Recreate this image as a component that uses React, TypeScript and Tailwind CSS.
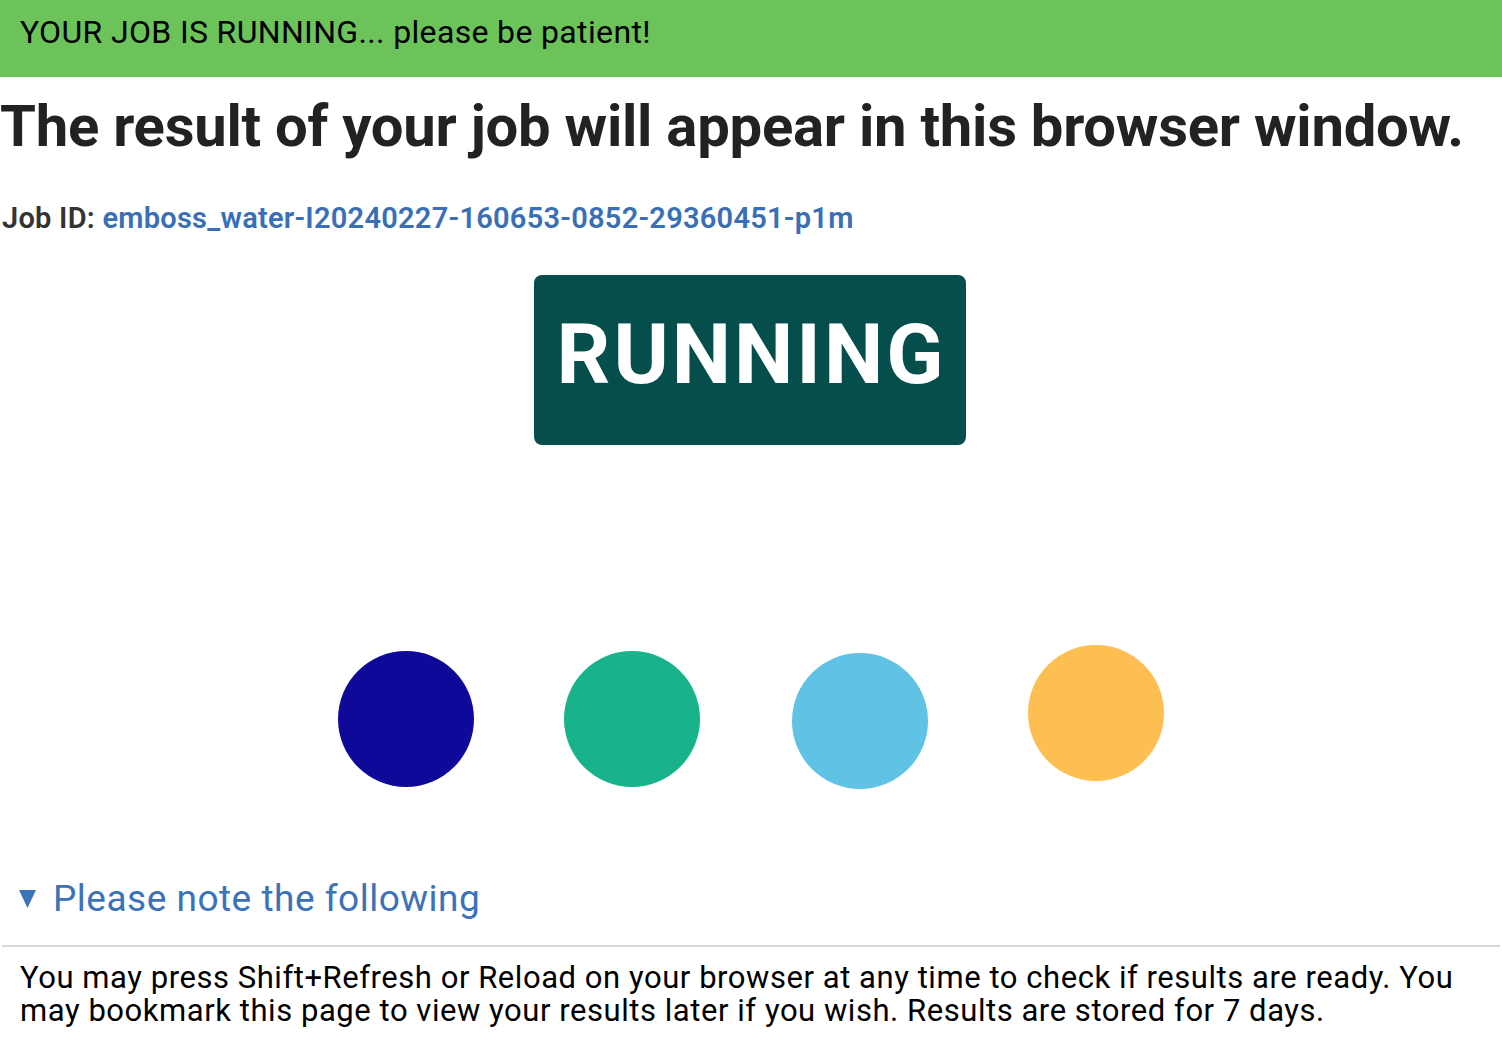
import { useState } from 'react';

const DOTS = [
  { color: 'bg-[#0e0999]', cls: 'mt-[6px]' },
  { color: 'bg-[#18b38a]', cls: 'mt-[6px] ml-[90px]' },
  { color: 'bg-[#60c2e4]', cls: 'mt-[8px] ml-[92px]' },
  { color: 'bg-[#fdbf52]', cls: 'mt-0 ml-[100px]' },
];

const font = { fontFamily: 'Roboto, "Noto Sans", sans-serif' };

export default function App() {
  const [open, setOpen] = useState(true);

  return (
    <div className="min-h-screen bg-white text-[#222]" style={font}>
      {/* status banner */}
      <div className="h-[77px] bg-[#6cc35a] pt-[16px] px-5">
        <p className="text-[32px] text-black leading-[32px] tracking-[0.35px]">YOUR JOB IS RUNNING... please be patient!</p>
      </div>

      <h1 className="mt-[17px] text-[58px] font-bold leading-[64px] text-[#222] tracking-[-0.25px]">
        The result of your job will appear in this browser window.
      </h1>

      <p className="mt-[43px] text-[29px] font-semibold leading-[34px] pl-[2px] text-[#333] tracking-[0.25px]">
        Job ID: <span className="text-[#3a6fb5]">emboss_water-I20240227-160653-0852-29360451-p1m</span>
      </p>

      <div className="flex justify-center mt-[40px]">
        <div className="w-[432px] h-[170px] bg-[#054e4c] rounded-lg flex items-center justify-center pb-[10px] ml-[-2px]">
          <span className="text-[84px] font-bold text-white leading-[84px] tracking-[3px] pl-[3px]">RUNNING</span>
        </div>
      </div>

      {/* loading dots */}
      <div className="flex justify-center items-start mt-[200px] ml-[-1px]">
        {DOTS.map((d) => (
          <div key={d.color} className={`w-[136px] h-[136px] rounded-full shrink-0 ${d.color} ${d.cls}`} />
        ))}
      </div>

      <details open={open} className="mt-[88px]" onToggle={(e) => setOpen((e.target as HTMLDetailsElement).open)}>
        <summary className="list-none cursor-pointer flex items-center pl-[19px] text-[37px] text-[#3b72b8] leading-[44px] tracking-[0.5px]">
          <svg width="17" height="18" viewBox="0 0 17 18" className="shrink-0">
            <polygon points="0,0 17,0 8.5,18" fill="#3b72b8" />
          </svg>
          <span className="ml-[17px]">Please note the following</span>
        </summary>
        <div className="mx-[2px] mt-[24px] border-t-2 border-[#d8d8d8]" />
        <p className="px-[20px] pt-[14px] text-[31px] leading-[33px] text-black tracking-[0.55px]">
          You may press Shift+Refresh or Reload on your browser at any time to check if results are ready. You may bookmark this page to view your results later if you wish. Results are stored for 7 days.
        </p>
      </details>
    </div>
  );
}
